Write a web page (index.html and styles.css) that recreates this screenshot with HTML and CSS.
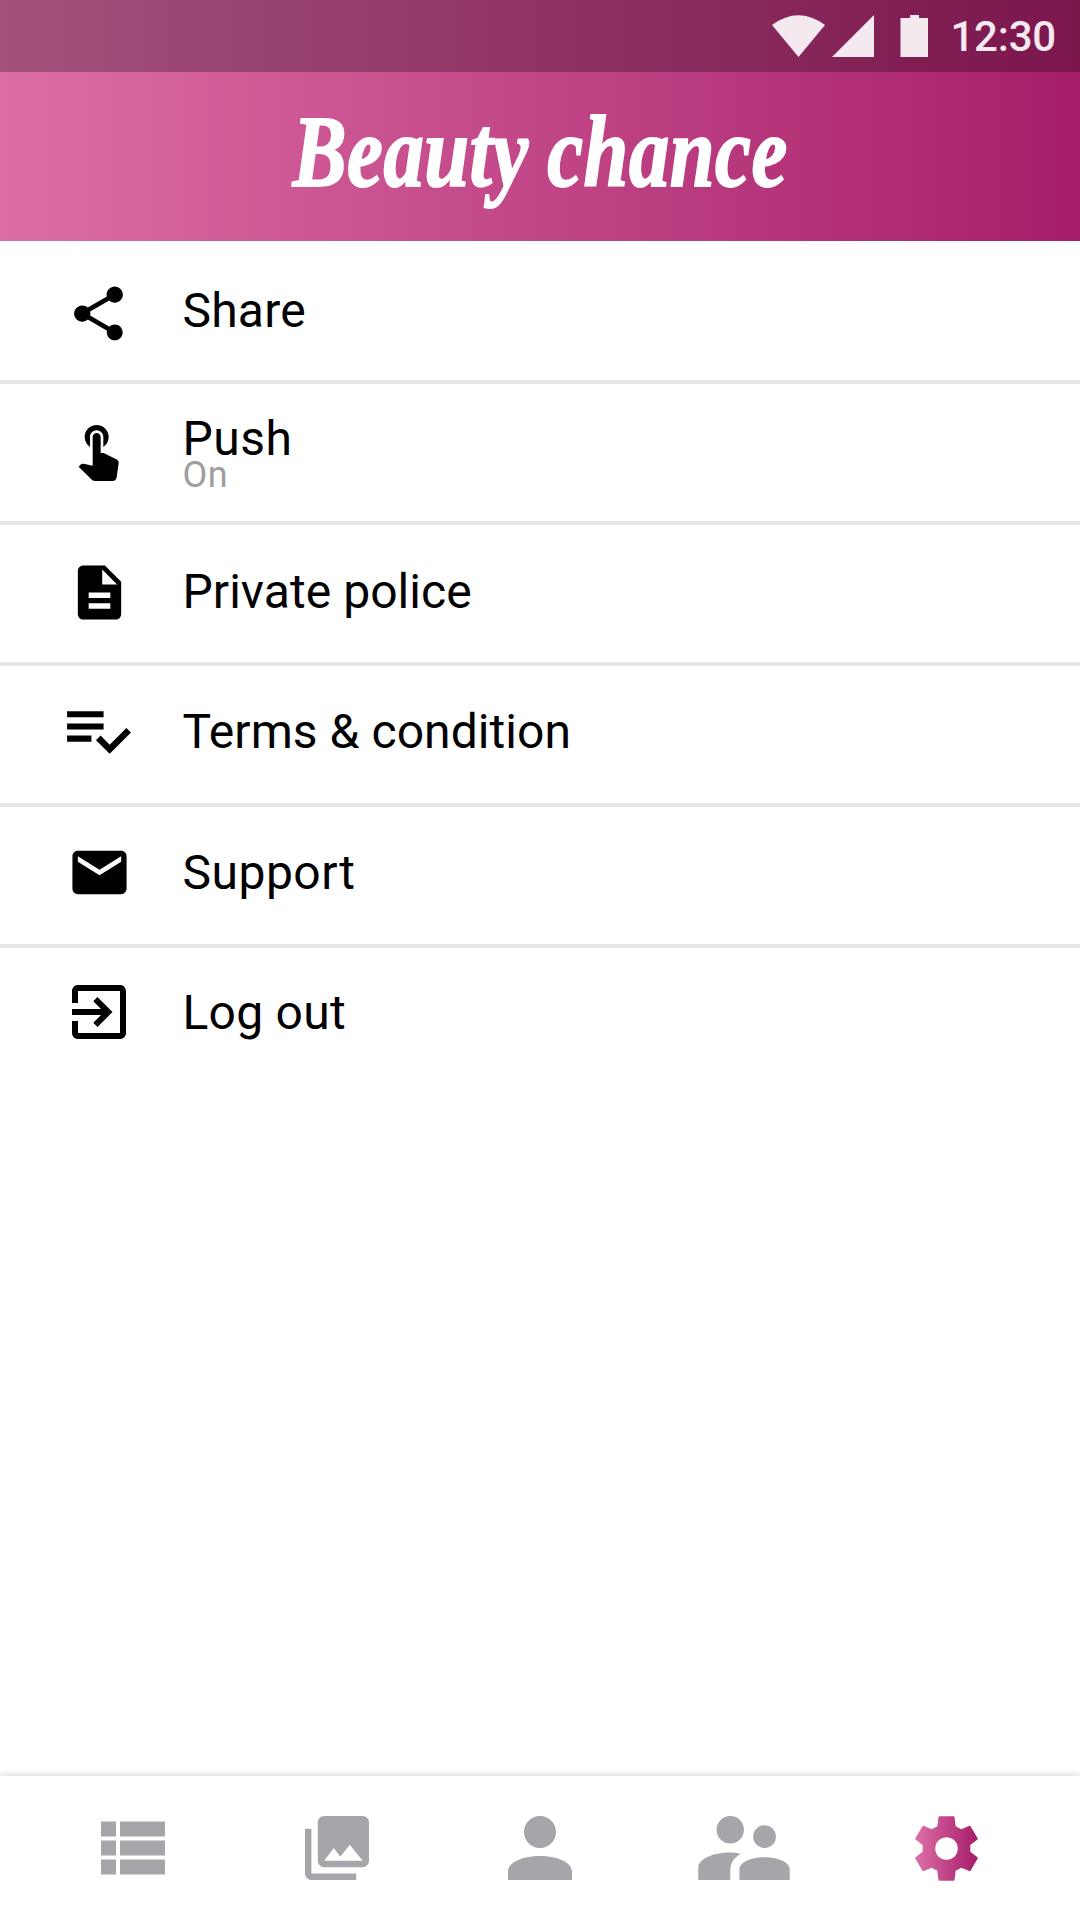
FILE: index.html
```html
<!DOCTYPE html>
<html lang="en">
<head>
<meta charset="utf-8">
<title>Beauty chance</title>
<link rel="stylesheet" href="styles.css">
</head>
<body>
<div class="screen">
  <header class="top">
    <div class="status">
      <svg class="signals" viewBox="0 0 156 42" width="156" height="42">
        <path d="M0 10Q26.500-9.500 53 10L26.500 42Z"/>
        <path d="M60 42L102 0V42Z"/>
        <path d="M128.500 3H138V0H147V3H156V42H128.500Z"/>
      </svg>
      <span class="clock">12:30</span>
    </div>
    <h1 class="brand"><span class="wordmark">Beauty chance</span></h1>
  </header>

  <main class="menu">
    <a class="row share">
      <svg class="icon" viewBox="0 0 24 24"><path d="M18 16.080c-.76 0-1.440.3-1.960.77L8.910 12.700c.05-.23.09-.46.09-.7s-.04-.47-.09-.7l7.050-4.110c.54.5 1.250.81 2.040.81 1.660 0 3-1.340 3-3s-1.340-3-3-3-3 1.340-3 3c0 .24.04.47.09.7L8.040 9.810C7.500 9.310 6.790 9 6 9c-1.660 0-3 1.340-3 3s1.340 3 3 3c.79 0 1.500-.31 2.040-.81l7.120 4.160c-.05.21-.08.43-.08.65 0 1.610 1.310 2.920 2.920 2.920s2.920-1.310 2.920-2.920-1.310-2.920-2.920-2.920z"/></svg>
      <span class="label">Share</span>
    </a>
    <a class="row push">
      <svg class="icon" viewBox="0 0 24 24"><path d="M9 11.240V7.500C9 6.120 10.120 5 11.500 5S14 6.120 14 7.500v3.740c1.210-.81 2-2.180 2-3.740C16 5.010 13.990 3 11.500 3S7 5.010 7 7.500c0 1.560.79 2.930 2 3.740zm9.840 4.630l-4.540-2.260c-.17-.07-.35-.11-.54-.11H13v-6c0-.83-.67-1.500-1.500-1.500S10 6.670 10 7.500v10.740l-3.430-.72c-.08-.01-.15-.03-.24-.03-.31 0-.59.13-.79.33l-.79.8 4.940 4.940c.27.27.65.44 1.060.44h6.790c.75 0 1.330-.55 1.440-1.280l.75-5.270c.01-.07.02-.14.02-.2 0-.62-.38-1.160-.91-1.380z"/></svg>
      <span class="label">Push<small class="state">On</small></span>
    </a>
    <a class="row private">
      <svg class="icon" viewBox="0 0 24 24"><path d="M14 2H6c-1.100 0-1.990.9-1.990 2L4 20c0 1.100.89 2 1.990 2H18c1.100 0 2-.9 2-2V8l-6-6zm2 16H8v-2h8v2zm0-4H8v-2h8v2zm-3-5V3.500L18.500 9H13z"/></svg>
      <span class="label">Private police</span>
    </a>
    <a class="row terms">
      <svg class="icon" viewBox="0 0 24 24"><path d="M14 10H2v2h12v-2zm0-4H2v2h12V6zM2 16h8v-2H2v2zm19.500-4.500L23 13l-6.990 7-4.510-4.500L13 14l3.010 3 5.490-5.500z"/></svg>
      <span class="label">Terms &amp; condition</span>
    </a>
    <a class="row support">
      <svg class="icon" viewBox="0 0 24 24"><path d="M20 4H4c-1.100 0-1.990.9-1.990 2L2 18c0 1.100.9 2 2 2h16c1.100 0 2-.9 2-2V6c0-1.100-.9-2-2-2zm0 4l-8 5-8-5V6l8 5 8-5v2z"/></svg>
      <span class="label">Support</span>
    </a>
    <a class="row logout">
      <svg class="icon" viewBox="0 0 24 24"><path d="M10.090 15.590L11.500 17l5-5-5-5-1.410 1.410L12.670 11H3v2h9.670l-2.580 2.590zM19 3H5c-1.110 0-2 .9-2 2v4h2V5h14v14H5v-4H3v4c0 1.100.89 2 2 2h14c1.100 0 2-.9 2-2V5c0-1.100-.9-2-2-2z"/></svg>
      <span class="label">Log out</span>
    </a>
  </main>

  <nav class="tabs">
    <a class="tab"><svg width="64" height="64" viewBox="0 0 64 64"><path d="M0 5.500h15v15H0zM19 5.500h45v15H19zM0 24.500h15v15H0zM19 24.500h45v15H19zM0 43.500h15v15H0zM19 43.500h45v15H19z"/></svg></a>
    <a class="tab"><svg width="64" height="64" viewBox="2 2 20 20"><path d="M22 16V4c0-1.100-.9-2-2-2H8c-1.100 0-2 .9-2 2v12c0 1.100.9 2 2 2h12c1.100 0 2-.9 2-2zm-11-4l2.030 2.710L16 11l4 5H8l3-4zM2 6v14c0 1.100.9 2 2 2h14v-2H4V6H2z"/></svg></a>
    <a class="tab"><svg width="64" height="64" viewBox="4 4 16 16"><path d="M12 12c2.210 0 4-1.790 4-4s-1.790-4-4-4-4 1.790-4 4 1.790 4 4 4zm0 2c-4.500 0-8 1.700-8 3.800V20h16v-2.200c0-2.100-3.500-3.800-8-3.800z"/></svg></a>
    <a class="tab people"><svg width="92" height="64" viewBox="2 5 20 14"><path d="M16.500 12c1.380 0 2.490-1.120 2.490-2.500S17.880 7 16.500 7C15.120 7 14 8.120 14 9.500s1.120 2.500 2.500 2.500zM9 11c1.660 0 2.990-1.340 2.990-3S10.660 5 9 5C7.340 5 6 6.340 6 8s1.340 3 3 3zm7.500 3c-3.100 0-5.500 1.150-5.500 2.600V19h11v-2.400c0-1.450-2.400-2.600-5.500-2.600zM9 13c-3.900 0-7 1.500-7 3.350V19h7v-2.250c0-.85.33-2.340 2.240-3.500C10.500 13.100 9.660 13 9 13z"/></svg></a>
    <a class="tab active"><svg width="63" height="65" viewBox="165 169 189 195">
      <defs><linearGradient id="gear" x1="0" x2="1"><stop offset="0" stop-color="#dd6fa8"/><stop offset="1" stop-color="#a51c68"/></linearGradient></defs>
      <path fill="url(#gear)" fill-rule="evenodd" d="M238 170H281Q283 170 283.500 172L287 200L304 209L328 198.500Q330 198 331.500 200L353 236Q354 238 352.500 239.500L331 256V276L352.500 293Q354 294.500 353 296.500L331.500 333Q330 335 328 334L304 324L287 333L283.500 361Q283 363 281 363H238Q236 363 235.500 361L232 333L215 324L191 334Q189 335 187.500 333L166 296.500Q165 294.500 166.500 293L188 276V256L166.500 239.500Q165 238 166 236L187.500 200Q189 198 191 198.500L215 209L232 200L235.500 172Q236 170 238 170ZM259.500 232.500a34 34 0 1 0 .01 0Z"/></svg></a>
  </nav>
</div>
</body>
</html>
```
FILE: styles.css
```css
* { box-sizing: border-box; }

body {
  margin: 0;
  background: #fff;
  font-family: Roboto, sans-serif;
}

.screen {
  display: flex;
  flex-direction: column;
  width: 1080px;
  height: 1920px;
  overflow: hidden;
}

.top {
  height: 241px;
  background: linear-gradient(90deg, #dc6ea6, #a61e69);
}

.status {
  display: flex;
  justify-content: flex-end;
  align-items: flex-start;
  gap: 22px;
  height: 72px;
  padding: 15px 24px 0 0;
  background: rgba(0, 0, 0, .26);
}

.signals { fill: #f4e9ef; }

.clock {
  margin-top: 1px;
  color: #f4e9ef;
  font-size: 42px;
  font-weight: 500;
  line-height: 42px;
  letter-spacing: -.2px;
}

.brand {
  display: flex;
  justify-content: center;
  height: 169px;
  margin: 0;
}

.wordmark {
  color: #fff;
  font: italic bold 102px/159px "Liberation Serif", serif;
  letter-spacing: .7px;
  word-spacing: -3px;
  white-space: nowrap;
  -webkit-text-stroke: 2px #fff;
  transform: scaleX(.79);
}

.menu {
  flex: 1;
  display: flex;
  flex-direction: column;
}

.row {
  display: flex;
  align-items: flex-start;
  height: 141px;
  padding-left: 63px;
  border-bottom: 4px solid #e6e6e6;
}

.share { height: 143px; }
.logout { border-bottom: 0; }

.icon {
  flex: none;
  width: 65px;
  height: 65px;
  margin: 35px 4px 0 3.500px;
}

.share .icon { margin: 40px 4.500px 0 3px; }
.push .icon { width: 64px; height: 64px; margin: 33px 5.500px 0 3px; }
.terms .icon { width: 73px; height: 73px; margin: 26.500px 1.500px 0 -2px; }
.support .icon { margin-top: 32.500px; }
.logout .icon { width: 72px; height: 72px; margin: 28px .5px 0 0; }

.label {
  display: flex;
  flex-direction: column;
  margin: 38px 0 0 47px;
  font-size: 48px;
  line-height: 56px;
  letter-spacing: .5px;
  color: #000;
}

.share .label { margin-top: 42px; letter-spacing: .2px; }
.push .label { margin-top: 27px; }
.private .label { margin-top: 39px; letter-spacing: .05px; }
.terms .label { letter-spacing: .05px; }
.logout .label { margin-top: 37px; letter-spacing: .25px; }

.state {
  font-size: 36px;
  line-height: 36px;
  margin-top: -10px;
  color: #9e9e9e;
}

.tabs {
  display: grid;
  grid-template-columns: repeat(5, 1fr);
  height: 144px;
  padding: 40px 31.500px 0;
  background: #fff;
  box-shadow: 0 0 8px rgba(0, 0, 0, .22);
}

.tab {
  display: flex;
  justify-content: center;
  align-items: flex-start;
  fill: #a5a6aa;
}

.people { padding-left: 2px; }
```
